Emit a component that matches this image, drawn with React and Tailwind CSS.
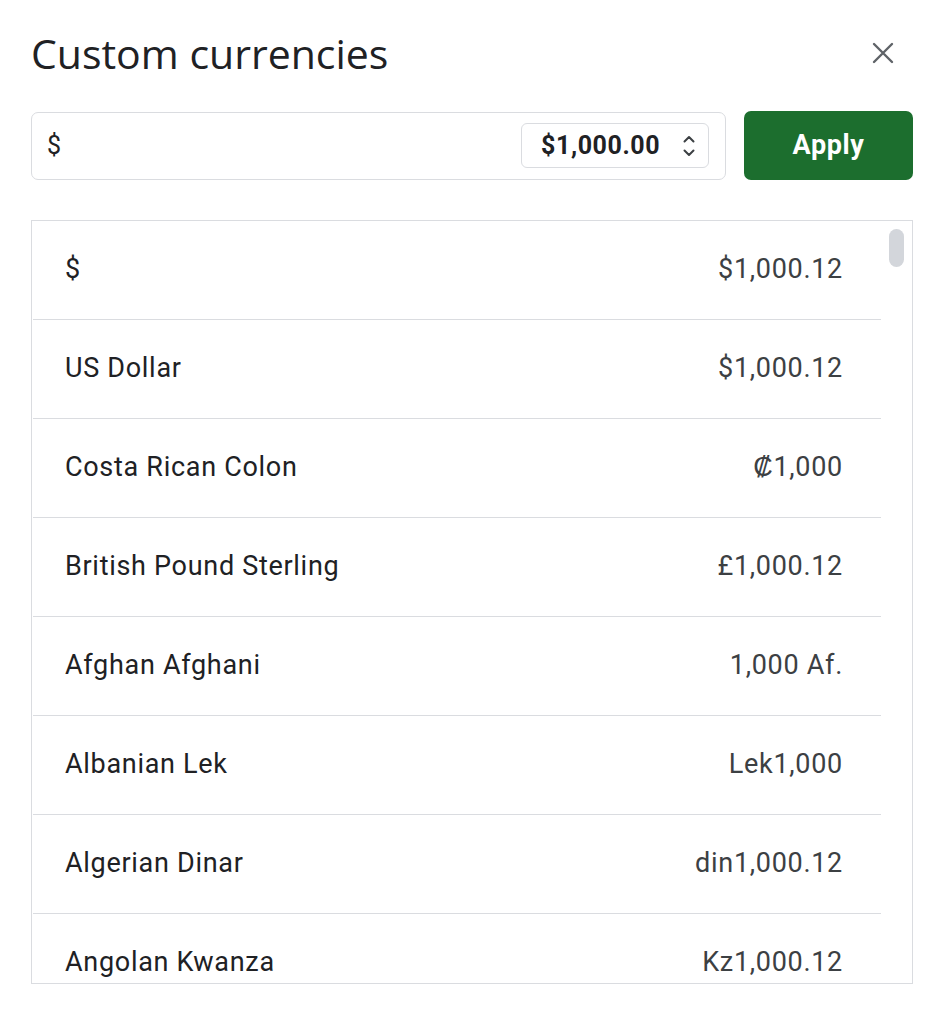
import React from "react";

const rows = [
  ["$", "$1,000.12"],
  ["US Dollar", "$1,000.12"],
  ["Costa Rican Colon", "₡1,000"],
  ["British Pound Sterling", "£1,000.12"],
  ["Afghan Afghani", "1,000 Af."],
  ["Albanian Lek", "Lek1,000"],
  ["Algerian Dinar", "din1,000.12"],
  ["Angolan Kwanza", "Kz1,000.12"],
];

export default function App() {
  return (
    <div className="w-[946px] h-[1024px] bg-white" style={{ fontFamily: "Roboto, 'Liberation Sans', sans-serif" }}>
      <div className="pl-[31px] pr-[33px] pt-[28px]">
        <div className="flex items-center justify-between h-[50px]">
          <h1 className="text-[41px] leading-none text-[#202124] tracking-[0px]" style={{ fontFamily: "'Open Sans', Roboto, sans-serif" }}>
            Custom currencies
          </h1>
          <button className="w-[40px] h-[40px] flex items-center justify-center mr-[10px]">
            <svg width="22" height="22" viewBox="0 0 22 22" fill="none" stroke="#5f6368" strokeWidth="2.4" strokeLinecap="round">
              <path d="M2 2L20 20M20 2L2 20" />
            </svg>
          </button>
        </div>
        <div className="flex items-center gap-[18px] mt-[33px]">
          <div className="flex-1 h-[68px] border border-[#dadce0] rounded-[7px] flex items-center justify-between pl-[15px] pr-[16px]">
            <span className="text-[25px] text-[#202124]">$</span>
            <div className="h-[45px] w-[188px] border border-[#dadce0] rounded-[6px] flex items-center pl-[19px] pr-[12px] justify-between">
              <span className="text-[25px] font-bold text-[#202124] tracking-[0.6px]">$1,000.00</span>
              <svg width="14" height="24" viewBox="0 0 14 24" fill="none" stroke="#3c4043" strokeWidth="2" strokeLinecap="round" strokeLinejoin="round">
                <path d="M2.5 7.5L7 3L11.5 7.5" />
                <path d="M2.5 16.5L7 21L11.5 16.5" />
              </svg>
            </div>
          </div>
          <button className="w-[169px] h-[69px] bg-[#1c6e2e] rounded-[7px] text-white text-[27px] font-bold tracking-[0.6px]">
            Apply
          </button>
        </div>
        <div className="relative mt-[40px] h-[764px] border border-[#dadce0] overflow-hidden">
          <div className="w-[848px] ml-[1px]">
            {rows.map(([name, val], i) => (
              <div
                key={i}
                className="h-[99px] border-b border-[#dadce0] flex items-center justify-between pl-[32px] pr-[38px] pb-[2px]"
              >
                <span className="text-[27px] text-[#202124] tracking-[0.7px]">{name}</span>
                <span className="text-[27px] text-[#3c4043] tracking-[0.7px]">{val}</span>
              </div>
            ))}
          </div>
          <div className="absolute right-[8px] top-[8px] w-[15px] h-[38px] rounded-full bg-[#d3d6db]" />
        </div>
      </div>
    </div>
  );
}
